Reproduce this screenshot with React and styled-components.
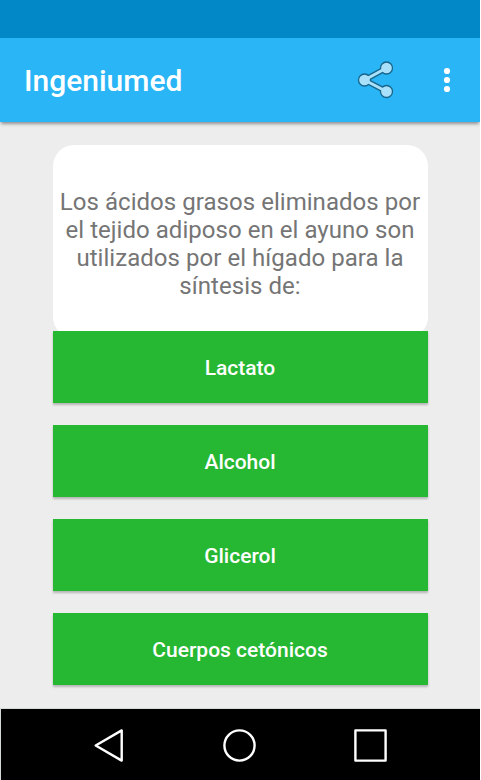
import React from "react";
import styled, { createGlobalStyle } from "styled-components";

const Global = createGlobalStyle`
  * { box-sizing: border-box; }
  body { margin: 0; background: #fff; font-family: Roboto, "Noto Sans", sans-serif; }
`;

const Screen = styled.div`
  width: 480px;
  height: 780px;
  display: flex;
  flex-direction: column;
  background: #ededed;
  overflow: hidden;
`;

const StatusBar = styled.div`
  height: 38px;
  flex: none;
  background: #0288c7;
`;

const AppBar = styled.header`
  height: 84px;
  flex: none;
  display: flex;
  align-items: center;
  padding: 0 29px 0 24px;
  background: #29b5f6;
  box-shadow: 0 3px 3px -1px rgba(0, 0, 0, 0.38);
`;

const Title = styled.h1`
  margin: 0;
  padding-top: 1px;
  flex: 1;
  color: #fff;
  font-size: 30px;
  line-height: 37px;
  font-weight: 500;
`;

const IconButton = styled.button`
  display: flex;
  padding: 0;
  border: 0;
  background: none;
  margin-right: ${(p) => p.$gap || 0}px;
`;

const Content = styled.main`
  flex: 1;
  display: flex;
  flex-direction: column;
  padding: 23px 52px 0 53px;
`;

const Question = styled.section`
  height: 193px;
  flex: none;
  display: flex;
  flex-direction: column;
  align-items: center;
  padding: 43px 1px 0 0;
  margin-bottom: -7px;
  border-radius: 21px;
  background: #fff;
  color: #757575;
  font-size: 24px;
  line-height: 28px;
  letter-spacing: 0.04px;
`;

const Line = styled.span`
  white-space: nowrap;
`;

const Answers = styled.div`
  display: flex;
  flex-direction: column;
  gap: 22px;
`;

const Answer = styled.button`
  height: 72px;
  padding: 3px 1px 0 0;
  border: 0;
  background: #26b733;
  color: #fff;
  font: 500 21px/25px Roboto, "Noto Sans", sans-serif;
  box-shadow: 0 2px 2px rgba(0, 0, 0, 0.24);
`;

const NavBar = styled.nav`
  height: 72px;
  flex: none;
  display: flex;
  align-items: center;
  justify-content: space-between;
  padding: 1px 92px 0 91px;
  border-top: 1px solid #d3d9d9;
  border-left: 1px solid #d3d9d9;
  background: #000;
`;

const ShareIcon = () => (
  <svg width="38" height="40" viewBox="0 0 38 40">
    <path d="M29.5 8 7.5 20l22 11.5" fill="none" stroke="#17658a" strokeWidth="5.6" />
    <g fill="#a9e1fb" stroke="#17658a" strokeWidth="1.3">
      <circle cx="29.5" cy="8" r="6" />
      <circle cx="7.5" cy="20" r="6" />
      <circle cx="29.5" cy="31.5" r="6" />
    </g>
    <path d="M29.5 8 7.5 20l22 11.5" fill="none" stroke="#a9e1fb" strokeWidth="3" />
  </svg>
);

const MoreIcon = () => (
  <svg width="8" height="26" viewBox="0 0 8 26" fill="#fff">
    <circle cx="4" cy="4" r="3.1" />
    <circle cx="4" cy="13" r="3.1" />
    <circle cx="4" cy="22" r="3.1" />
  </svg>
);

const NavIcon = ({ children }) => (
  <svg width="36" height="36" viewBox="0 0 36 36" fill="none" stroke="#fff" strokeWidth="2.4" strokeLinejoin="round">
    {children}
  </svg>
);

const lines = [
  "Los ácidos grasos eliminados por",
  "el tejido adiposo en el ayuno son",
  "utilizados por el hígado para la",
  "síntesis de:",
];

const answers = ["Lactato", "Alcohol", "Glicerol", "Cuerpos cetónicos"];

export default function App() {
  return (
    <>
      <Global />
      <Screen>
        <StatusBar />
        <AppBar>
          <Title>Ingeniumed</Title>
          <IconButton $gap={48} aria-label="Compartir">
            <ShareIcon />
          </IconButton>
          <IconButton aria-label="Más opciones">
            <MoreIcon />
          </IconButton>
        </AppBar>
        <Content>
          <Question>
            {lines.map((line) => (
              <Line key={line}>{line}</Line>
            ))}
          </Question>
          <Answers>
            {answers.map((answer) => (
              <Answer key={answer}>{answer}</Answer>
            ))}
          </Answers>
        </Content>
        <NavBar>
          <IconButton aria-label="Atrás">
            <NavIcon>
              <path d="M29.7 3.4v30.2L3.7 18.5Z" />
            </NavIcon>
          </IconButton>
          <IconButton aria-label="Inicio">
            <NavIcon>
              <circle cx="17.5" cy="18.5" r="15.1" />
            </NavIcon>
          </IconButton>
          <IconButton aria-label="Recientes">
            <NavIcon>
              <path d="M3.4 3.4h30.2v30.2H3.4Z" />
            </NavIcon>
          </IconButton>
        </NavBar>
      </Screen>
    </>
  );
}
